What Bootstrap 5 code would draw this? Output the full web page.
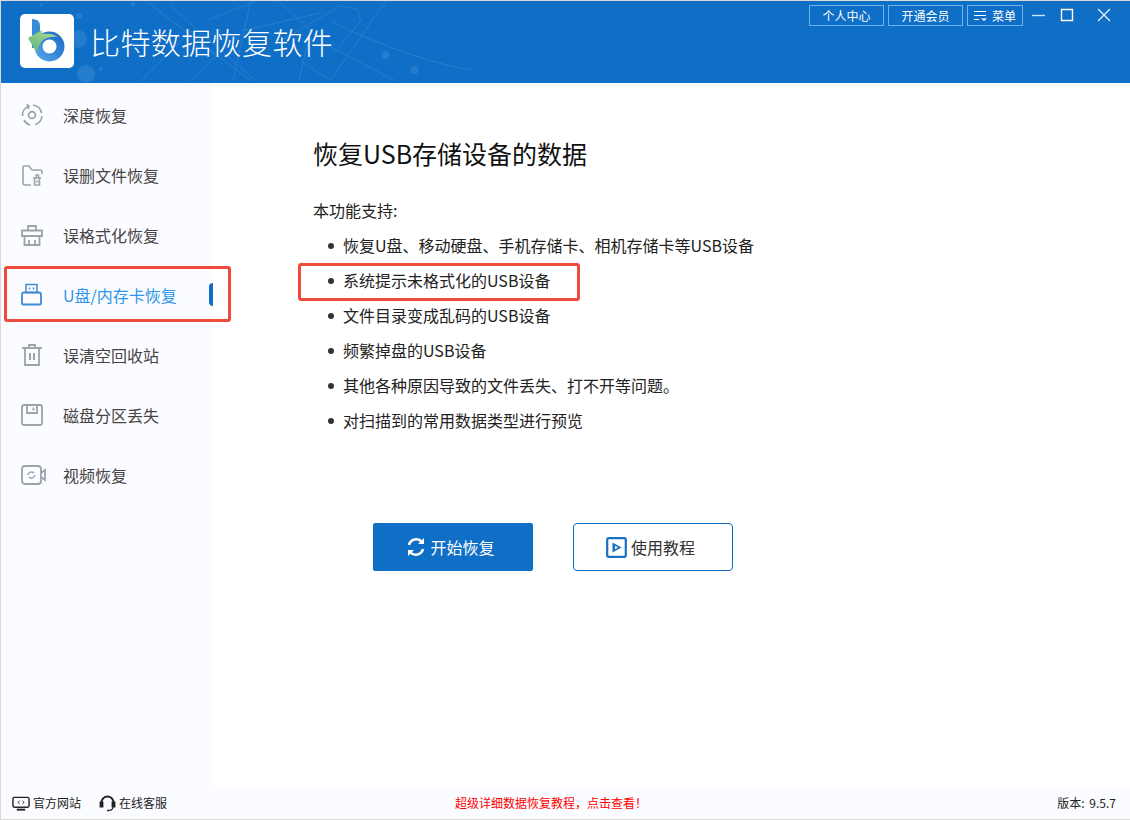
<!DOCTYPE html>
<html lang="zh-CN">
<head>
<meta charset="utf-8">
<title>比特数据恢复软件</title>
<link rel="stylesheet" href="https://cdn.jsdelivr.net/npm/bootstrap@5.3.0/dist/css/bootstrap.min.css">
<style>
html,body{margin:0;height:100%;background:#fff;}
body{font-family:"Noto Sans CJK SC","Liberation Sans",sans-serif;color:#333;overflow:hidden;}
.app-win{width:1130px;height:820px;border:1px solid #d9d9d9;border-right:0;}
.app-head{height:82px;background:#0f6ec6;flex:none;}
.head-deco{inset:0;width:100%;height:100%;}
.logo-box{width:54px;height:54px;margin:13px 16px 0 19px;background:#fff;border-radius:5px;flex:none;z-index:1;}
.logo-box svg{display:block;}
.app-title{font-size:30px;line-height:80px;color:#fff;font-weight:300;letter-spacing:.4px;margin:0;z-index:1;}
.win-ctrls{margin-top:4px;margin-right:19px;z-index:1;}
.top-btn{height:21px;border:1px solid #6fb3ee;color:#fff;font-size:12px;line-height:19px;padding:0;border-radius:0;background:transparent;}
.top-btn:hover{color:#fff;}
.w-a{width:75px;margin-right:4px;}
.w-b{width:56px;margin-right:8px;}
.win-ic{flex:none;margin-right:14px;}
.win-x{margin-left:9px;margin-right:0;}
.side-pane{width:211px;background:#fbfcff;padding-top:2px;flex:none;}
.side-item{height:60px;padding-left:19px;font-size:16px;color:#444;}
.side-item.on{color:#2f95ec;}
.side-ic{width:26px;height:26px;margin-right:17px;flex:none;}
.on-bar{right:-1px;top:18px;width:4px;height:23px;background:#0f6ec6;border-radius:4px 0 0 4px;}
.main-pane{padding:51px 0 0 101px;}
.main-h{font-size:25px;line-height:38px;font-weight:400;color:#111;margin:0 0 26px;}
.intro{font-size:16px;line-height:24px;color:#222;margin:0 0 6px;}
.feat-list{margin:0 0 85px 0;padding:0;list-style:none;}
.feat-list li{height:35px;font-size:16px;color:#222;padding-left:15px;line-height:35px;display:flex;align-items:center;}
.feat-list li::before{content:"";width:6px;height:6px;border-radius:50%;background:#333;margin-right:9px;flex:none;}
.cta-row{padding-left:60px;gap:40px;}
.cta{width:160px;height:48px;border-radius:2px;font-size:16px;padding:0 5px 0 0;}
.cta-main{background:#0f6ec6;border:1px solid #0f6ec6;color:#fff;}
.cta-main:hover{background:#0f6ec6;color:#fff;}
.cta-alt{background:#fff;border:1px solid #0f6ec6;color:#333;border-radius:4px;}
.cta-alt:hover{background:#fff;color:#333;}
.cta svg{margin-right:4px;}
.app-foot{height:32px;background:#fbfcff;flex:none;font-size:12px;color:#222;padding:0 14px 0 11px;}
.foot-l{width:443px;}
.foot-link{margin-right:18px;}
.foot-link svg{margin-right:3px;}
.foot-red{color:#f00;}
.foot-ver{word-spacing:2px;}
.mark-box{border:3px solid #ee4b3e;border-radius:3px;pointer-events:none;}
.mb-a{left:3px;top:265px;width:227px;height:56px;}
.mb-b{left:297px;top:262px;width:282px;height:38px;}
</style>
</head>
<body>
<div class="app-win d-flex flex-column position-relative">
  <header class="app-head d-flex align-items-start position-relative overflow-hidden">
    <svg class="head-deco position-absolute" viewBox="0 0 1130 82" fill="none" preserveAspectRatio="none" aria-hidden="true">
      <g stroke="#4a92d6" stroke-width="1" opacity=".45">
        <path d="M140 80L190 30L215 55L190 80M145 0L200 42L250 80M170 5L255 80M250 0L232 80M278 0L310 30L298 80"/>
        <path d="M280 40L340 5L356 8L360 20L335 50M330 20C380 45 430 62 470 69M330 79L385 0M330 46L395 80M300 60L330 80M205 20L255 0M240 30L320 12"/>
      </g>
      <g fill="#5a9edc" opacity=".3">
        <circle cx="78" cy="15" r="3"/><circle cx="77" cy="38" r="9"/><circle cx="85" cy="73" r="9"/><circle cx="71" cy="55" r="3"/><circle cx="132" cy="3" r="2"/><circle cx="40" cy="4" r="1.500"/><circle cx="100" cy="68" r="2"/><circle cx="385" cy="54" r="4"/><circle cx="414" cy="69" r="4"/>
      </g>
    </svg>
    <div class="logo-box">
      <svg width="54" height="54" viewBox="0 0 54 54" aria-hidden="true">
        <defs>
          <linearGradient id="lg-ring" x1="0" y1="1" x2="1" y2="0"><stop offset="0" stop-color="#4f9fe8"/><stop offset="1" stop-color="#1f6fc4"/></linearGradient>
          <linearGradient id="lg-arrow" x1="0" y1="1" x2="1" y2="0"><stop offset="0" stop-color="#58b27e"/><stop offset="1" stop-color="#b6df8e"/></linearGradient>
        </defs>
        <path d="M12 5q8 0 8 7v22h-8z" fill="#3a8ada"/>
        <circle cx="29.500" cy="32.500" r="11" fill="none" stroke="url(#lg-ring)" stroke-width="8"/>
        <path d="M8 24L22 16l0 4c6-1 12 0 16 3-6-1-11 0-15 3-3 3-5 7-6 13z" fill="url(#lg-arrow)"/>
      </svg>
    </div>
    <h1 class="app-title position-relative">比特数据恢复软件</h1>
    <div class="win-ctrls ms-auto d-flex align-items-start">
      <a class="btn top-btn w-a" href="#">个人中心</a>
      <a class="btn top-btn w-a" href="#">开通会员</a>
      <a class="btn top-btn w-b d-flex align-items-center justify-content-center" href="#">
        <svg class="me-1" width="14" height="13" viewBox="0 0 14 13" fill="none" stroke="#fff" aria-hidden="true"><path d="M0 2.500h12M0 6.500h12M0 10.500h5"/><path d="M7 9.500h6L10 12z" fill="#fff" stroke="none"/></svg>
        菜单
      </a>
      <svg class="win-ic" width="15" height="21" viewBox="0 0 15 21" stroke="#cfe4f8" stroke-width="1.400" aria-hidden="true"><path d="M1 10.500h13"/></svg>
      <svg class="win-ic" width="14" height="21" viewBox="0 0 14 21" fill="none" stroke="#fff" stroke-width="1.400" aria-hidden="true"><path d="M1.500 4.500h11v11h-11z"/></svg>
      <svg class="win-ic win-x" width="14" height="21" viewBox="0 0 14 21" fill="none" stroke="#e6f1fb" stroke-width="1.300" aria-hidden="true"><path d="M1 4l12 12M13 4L1 16"/></svg>
    </div>
  </header>

  <div class="d-flex flex-grow-1 overflow-hidden">
    <nav class="side-pane">
      <div class="side-item d-flex align-items-center">
        <svg class="side-ic" viewBox="0 0 26 26" fill="none" stroke="#9aa3ad" stroke-width="1.700" aria-hidden="true"><circle cx="12" cy="13" r="3.400"/><path d="M2.500 14a9.800 9.800 0 0 1 6.500-10M6.500 2.500L9 4l-1 3M13 3a10 10 0 0 1 8.500 8M22 14a9.800 9.800 0 0 1-7 8.500M10 23a10 10 0 0 1-6-5"/></svg>
        深度恢复
      </div>
      <div class="side-item d-flex align-items-center">
        <svg class="side-ic" viewBox="0 0 26 26" fill="none" stroke="#9aa3ad" stroke-width="1.600" aria-hidden="true"><path d="M11 23H5q-2 0-2-2V5q0-1 1-1h5l3 4h8q2 0 2 2v2"/><path d="M13 16h8M14.500 16v7h5v-7M16 16v-3h2.500v3M16 19.500h2.500"/></svg>
        误删文件恢复
      </div>
      <div class="side-item d-flex align-items-center">
        <svg class="side-ic" viewBox="0 0 26 26" fill="none" stroke="#9aa3ad" stroke-width="1.800" aria-hidden="true"><path d="M2 8.500h20v5.500H2zM4.500 14v9h15v-9M8 8.500V4h8v4.500M9 23v-5M15 23v-5"/></svg>
        误格式化恢复
      </div>
      <div class="side-item on d-flex align-items-center position-relative">
        <svg class="side-ic" viewBox="0 0 26 26" fill="none" stroke="#3f8ad0" stroke-width="1.800" aria-hidden="true"><path d="M6 2.500h11v8H6z" stroke-width="1.500"/><path d="M4 10.500h15q2 0 2 2v9q0 1-1 1H3q-1 0-1-1v-9q0-2 2-2z"/><path d="M9.500 5.500v2M13.500 5.500v2" stroke-width="1.500"/></svg>
        U盘/内存卡恢复
        <span class="on-bar position-absolute"></span>
      </div>
      <div class="side-item d-flex align-items-center">
        <svg class="side-ic" viewBox="0 0 26 26" fill="none" stroke="#9aa3ad" stroke-width="1.800" aria-hidden="true"><path d="M2 6h20M5 6v17h14V6M9 6V3h6v3"/><path d="M10 11v7M14 11v7" stroke-width="2"/></svg>
        误清空回收站
      </div>
      <div class="side-item d-flex align-items-center">
        <svg class="side-ic" viewBox="0 0 26 26" fill="none" stroke="#9aa3ad" stroke-width="1.800" aria-hidden="true"><rect x="2" y="3" width="20" height="20" rx="2"/><path d="M7 3v8h10V3M13.500 5.500v3"/></svg>
        磁盘分区丢失
      </div>
      <div class="side-item d-flex align-items-center">
        <svg class="side-ic" viewBox="0 0 26 26" fill="none" stroke="#9aa3ad" stroke-width="1.800" aria-hidden="true"><rect x="2" y="4" width="19" height="18" rx="3"/><path d="M21 11l4-3v10l-4-3"/><path d="M8 13a3.500 3.500 0 0 1 6-2M15 13a3.500 3.500 0 0 1-6 2" stroke-width="1.500"/></svg>
        视频恢复
      </div>
    </nav>

    <main class="main-pane flex-grow-1">
      <h2 class="main-h">恢复USB存储设备的数据</h2>
      <p class="intro">本功能支持:</p>
      <ul class="feat-list">
        <li>恢复U盘、移动硬盘、手机存储卡、相机存储卡等USB设备</li>
        <li>系统提示未格式化的USB设备</li>
        <li>文件目录变成乱码的USB设备</li>
        <li>频繁掉盘的USB设备</li>
        <li>其他各种原因导致的文件丢失、打不开等问题。</li>
        <li>对扫描到的常用数据类型进行预览</li>
      </ul>
      <div class="cta-row d-flex">
        <a class="btn cta cta-main d-flex align-items-center justify-content-center" href="#">
          <svg width="20" height="20" viewBox="0 0 20 20" fill="none" stroke="#fff" stroke-width="2.600" aria-hidden="true"><path d="M3 8a7.500 7.500 0 0 1 13-3"/><path d="M17 12a7.500 7.500 0 0 1-13 3"/><path d="M18 1v6h-6z" fill="#fff" stroke="none"/><path d="M2 19v-6h6z" fill="#fff" stroke="none"/></svg>
          开始恢复
        </a>
        <a class="btn cta cta-alt d-flex align-items-center justify-content-center" href="#">
          <svg width="21" height="21" viewBox="0 0 21 21" fill="none" aria-hidden="true"><rect x="1.200" y="1.200" width="18.600" height="18.600" rx="1.500" stroke="#1a70c4" stroke-width="2.200"/><path d="M6.500 5.500l9 5-9 5z" fill="#1a70c4"/><path d="M9 8.800l3 1.700-3 1.700z" fill="#fff"/></svg>
          使用教程
        </a>
      </div>
    </main>
  </div>

  <footer class="app-foot d-flex align-items-center">
    <div class="foot-l d-flex align-items-center">
      <span class="foot-link d-flex align-items-center">
        <svg width="18" height="15" viewBox="0 0 19 15" fill="none" stroke="#222" stroke-width="1.500" aria-hidden="true"><rect x="1" y="1" width="17" height="10.500" rx="1.500"/><path d="M5 14h9" stroke-width="2"/><path d="M8 4.500L6.300 6.300 8 8M11 4.500l1.700 1.800L11 8" stroke-width="1"/></svg>
        官方网站
      </span>
      <span class="foot-link d-flex align-items-center">
        <svg width="17" height="17" viewBox="0 0 17 17" fill="none" stroke="#222" stroke-width="1.800" aria-hidden="true"><path d="M2.500 10V7.500a6 6 0 0 1 12 0V10"/><path d="M1.500 7.500h2v4h-2zM13.500 7.500h2v4h-2z" fill="#222"/><path d="M14 12q0 3-4 3.500" stroke-width="1.200"/><circle cx="9" cy="15.500" r="1" fill="#222" stroke="none"/></svg>
        在线客服
      </span>
    </div>
    <span class="foot-red">超级详细数据恢复教程，点击查看！</span>
    <span class="foot-ver ms-auto">版本: 9.5.7</span>
  </footer>

  <div class="mark-box mb-a position-absolute"></div>
  <div class="mark-box mb-b position-absolute"></div>
</div>
<script src="https://cdn.jsdelivr.net/npm/bootstrap@5.3.0/dist/js/bootstrap.bundle.min.js"></script>
</body>
</html>
